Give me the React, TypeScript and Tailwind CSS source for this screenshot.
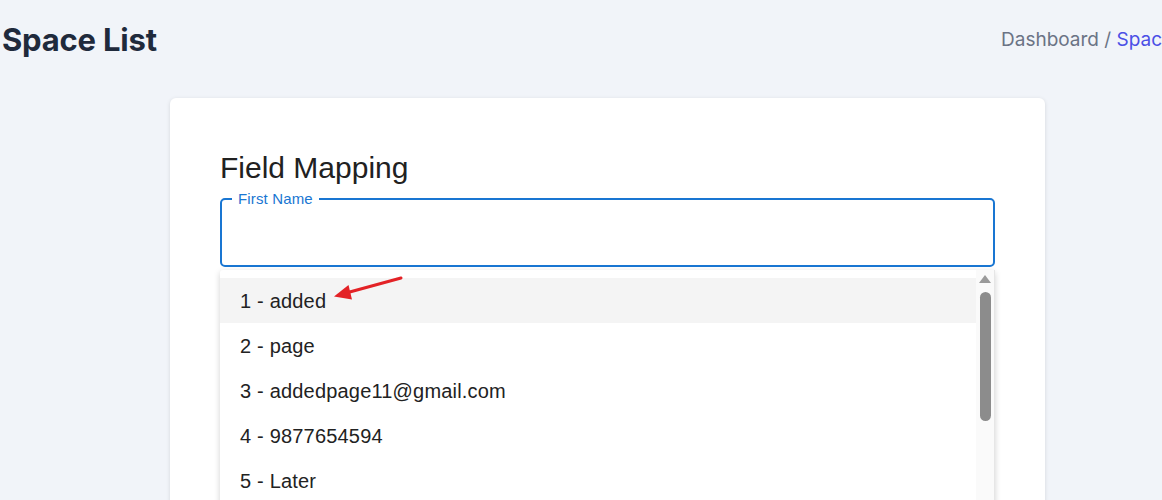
const items = ['1 - added', '2 - page', '3 - addedpage11@gmail.com', '4 - 9877654594', '5 - Later'];

const App = () => {
  return (
    <div className="w-full h-[500px] overflow-hidden bg-[#f1f4f9]">
      {/* page header */}
      <div className="flex items-center h-[80px]">
        <h1 className="flex-1 pl-[2px] text-[31px] font-bold text-[#1f2a3c] tracking-[-0.2px] [font-family:Inter,'Noto_Sans',sans-serif]">
          Space List
        </h1>
        <div className="w-[161px] shrink-0 overflow-hidden whitespace-nowrap text-[19px] [font-family:Inter,'Noto_Sans',sans-serif]">
          <span className="text-[#6b7385]">Dashboard / </span>
          <span className="text-[#4b4fe6]"> Space List</span>
        </div>
      </div>

      {/* card */}
      <div className="ml-[170px] mt-[18px] w-[875px] h-[420px] bg-white rounded-[6px] shadow-[0_1px_4px_rgba(0,0,0,0.12)] px-[50px] pt-[52px] [font-family:'Liberation_Sans',Arial,sans-serif]">
        <h2 className="text-[30px] leading-[36px] text-[#212121]">Field Mapping</h2>

        <div className="relative mt-[12px] h-[69px] border-2 border-[#1976d2] rounded-[5px]">
          <span className="absolute left-[10px] -top-[10px] bg-white px-[6px] text-[15px] leading-[17px] tracking-[0.00938em] text-[#1976d2]">
            First Name
          </span>
        </div>

        {/* autocomplete listbox */}
        <div className="relative mt-[3px] h-[240px] flex bg-white shadow-[0_2px_6px_rgba(0,0,0,0.18)] rounded-t-[3px]">
          <div className="flex-1 pt-[8px]">
            {items.map((item, i) => (
              <div
                key={item}
                className={`h-[45px] pl-[20px] flex items-center text-[20px] tracking-[0.00938em] text-[#222] ${i === 0 ? 'bg-[#f4f4f4]' : ''}`}
              >
                {item}
              </div>
            ))}
          </div>
          <div className="w-[19px] shrink-0 bg-[#fafafa] border-r border-[#e6e6e6] flex flex-col items-center pt-[5px]">
            <svg width="12" height="8" viewBox="0 0 12 8">
              <polygon points="6,0 12,8 0,8" fill="#9a9a9a" />
            </svg>
            <div className="mt-[9px] w-[11px] h-[129px] rounded-full bg-[#8c8c8c]" />
          </div>

          {/* red annotation arrow */}
          <svg className="absolute left-[112px] top-[5px]" width="76" height="30" viewBox="0 0 76 30">
            <line x1="69" y1="3" x2="14" y2="18" stroke="#e32226" strokeWidth="3" strokeLinecap="round" />
            <polygon points="2,21.5 20,24.5 16.5,10" fill="#e32226" />
          </svg>
        </div>
      </div>
    </div>
  );
};

export default App;
